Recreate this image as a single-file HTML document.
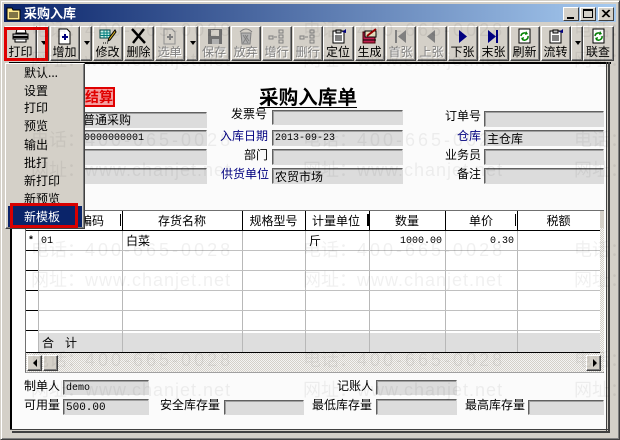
<!DOCTYPE html>
<html lang="zh"><head><meta charset="utf-8"><style>
html,body{margin:0;padding:0;width:620px;height:440px;overflow:hidden;background:#d4d0c8}
*{box-sizing:border-box}
body{font:12px "WenQuanYi Zen Hei","Noto Sans CJK SC",sans-serif;color:#000;position:relative}
div,span,svg{position:absolute}
.t{white-space:nowrap;line-height:14px}
.b{top:26px;height:35px;background:#d4d0c8;border:1px solid;border-color:#fff #404040 #404040 #fff;box-shadow:inset -1px -1px 0 #808080}
.b i{position:absolute;left:0;right:1px;top:18px;text-align:center;font-style:normal;font-size:12px;line-height:14px;white-space:nowrap}
.b.d i{color:#808080;text-shadow:1px 1px 0 #fff}
.b svg{left:50%;margin-left:-10px;top:1px;width:19px;height:17px}
.a{width:12px}
.a:after{content:"";position:absolute;left:3px;top:14px;border:3px solid transparent;border-top:4px solid #000;border-bottom:0}
.f{background:#dcdcdc;border:1px solid;border-color:#606060 #dcdcdc #dcdcdc #606060;box-shadow:inset 1px 1px 0 #a0a0a0;line-height:15px;padding-left:2px;white-space:nowrap;overflow:hidden}
.m{font-family:"Liberation Mono",monospace;font-size:10px}
.bl{color:#000080}
.w{color:rgba(0,0,0,.06);font:18px/26px "Liberation Sans","WenQuanYi Zen Hei",sans-serif;white-space:nowrap;pointer-events:none}
.w b{font-weight:normal;letter-spacing:3px}
.w u{text-decoration:none;letter-spacing:1px}
.v{background:#b8b8b8;width:1px;top:231px;height:121px}
.k{background:#000;width:1px;top:211px;height:20px}
.h{top:212px;height:17px;line-height:17px;text-align:center;white-space:nowrap}
.r{left:38px;width:562px;height:1px;background:#c0c0c0}
.d1{left:26px;width:12px;height:1px;background:#000}
.mi{left:24px;line-height:14px;white-space:nowrap}
</style></head><body>
<div style="left:0;top:0;width:620px;height:440px;border:1px solid;border-color:#d4d0c8 #404040 #404040 #d4d0c8;box-shadow:inset 1px 1px 0 #fff,inset -1px -1px 0 #808080"></div>

<div style="left:4px;top:4px;width:612px;height:18px;background:linear-gradient(90deg,#0a246a,#a6caf0)"></div>
<svg style="left:6px;top:6px" width="15" height="15"><path d="M1 2h5l1 2h7v10H1z" fill="#ffe98a" stroke="#000"/><path d="M3 7h9M3 9h9M3 11h9" stroke="#000"/></svg>
<div class="t" style="left:24px;top:6px;color:#fff;font-size:13px;font-weight:bold">采购入库</div>
<div style="left:563px;top:7px;width:16px;height:14px;background:#d4d0c8;border:1px solid;border-color:#fff #404040 #404040 #fff"><div style="left:3px;top:9px;width:7px;height:2px;background:#000"></div></div>
<div style="left:580px;top:7px;width:16px;height:14px;background:#d4d0c8;border:1px solid;border-color:#fff #404040 #404040 #fff"><div style="left:2px;top:1px;width:10px;height:9px;border:1px solid #000;border-top-width:2px"></div></div>
<div style="left:598px;top:7px;width:16px;height:14px;background:#d4d0c8;border:1px solid;border-color:#fff #404040 #404040 #fff"><svg style="left:2px;top:1px" width="10" height="10"><path d="M1 1l7 7M2 1l7 7M8 1L1 8M9 1L2 8" stroke="#000" stroke-width="1"/></svg></div>

<div class="b" style="left:5px;width:32px"><svg viewBox="0 0 19 17"><path d="M6 1h8l1 4H5z" fill="#fff" stroke="#000"/><path d="M2 6h15v5H2z" fill="#c0c0c0" stroke="#000"/><path d="M2 9h15" stroke="#000" stroke-width="2"/><path d="M4 11h11v3H4z" fill="#fff" stroke="#000"/></svg><i>打印</i></div>
<div class="b a" style="left:37px"></div>
<div class="b" style="left:50px;width:30px"><svg viewBox="0 0 19 17"><path d="M4 1h8l3 3v12H4z" fill="#fff" stroke="#000"/><path d="M7 9h6M10 6v6" stroke="#000080" stroke-width="2"/></svg><i>增加</i></div>
<div class="b a" style="left:80px"></div>
<div class="b" style="left:93px;width:30px"><svg viewBox="0 0 19 17"><path d="M2 2h10v8H2z" fill="#c8f0e8" stroke="#004040"/><path d="M2 5h10M2 7.500h10M6 2v8M9 2v8" stroke="#008080"/><path d="M17 2l1 2-6 8-2 1 1-3z" fill="#d8b020" stroke="#000"/><path d="M5 15h1M7 15h1M9 15h1" stroke="#000"/></svg><i>修改</i></div>
<div class="b" style="left:124px;width:30px"><svg viewBox="0 0 19 17"><path d="M3 1l13 14M15 1L4 15" stroke="#000" stroke-width="2.400"/></svg><i>删除</i></div>
<div class="b d" style="left:155px;width:30px"><svg viewBox="0 0 19 17"><path d="M4 1h8l3 3v12H4z" fill="#d4d0c8" stroke="#909090"/><path d="M7 9h6M10 6v6" stroke="#808080" stroke-width="2"/></svg><i>选单</i></div>
<div class="b a" style="left:186px"></div>
<div class="b d" style="left:199px;width:31px"><svg viewBox="0 0 19 17"><path d="M3 1h14v15H3z" fill="#707070"/><path d="M6 2h8v6H6z" fill="#d4d0c8"/><path d="M7 11h7v5H7z" fill="#b0b0b0"/></svg><i>保存</i></div>
<div class="b d" style="left:231px;width:30px"><svg viewBox="0 0 19 17"><path d="M5 5h10l-1 11H6z" fill="#b0b0b0" stroke="#808080"/><path d="M4 4q6-6 12 0" fill="#d4d0c8" stroke="#808080"/><path d="M7 7l5 8M12 7l-5 8M9 7l4 6" stroke="#808080"/></svg><i>放弃</i></div>
<div class="b d" style="left:262px;width:30px"><svg viewBox="0 0 19 17"><path d="M2 8h4v3H2zM7 9h3M12 2h4v3h-4zM12 7h4v3h-4zM12 12h4v3h-4z" fill="none" stroke="#808080"/></svg><i>增行</i></div>
<div class="b d" style="left:293px;width:30px"><svg viewBox="0 0 19 17"><path d="M2 8h4v3H2zM7 9h3M12 2h4v3h-4zM12 7h4v3h-4zM12 12h4v3h-4z" fill="none" stroke="#808080"/></svg><i>删行</i></div>
<div class="b" style="left:323px;width:31px"><svg viewBox="0 0 19 17"><path d="M4 3h11v12H4z" fill="#fff" stroke="#000"/><path d="M7 2h5v3H7z" fill="#c0c0c0" stroke="#000"/><path d="M6 8h7M6 10h7M6 12h7" stroke="#000"/><path d="M13 4l4-3v4z" fill="#000080"/></svg><i>定位</i></div>
<div class="b" style="left:355px;width:30px"><svg viewBox="0 0 19 17"><path d="M3 4h12v11H3z" fill="#c02050" stroke="#400"/><path d="M5 3h11v6H5z" fill="#e8e0c0" stroke="#000"/><path d="M7 8L16 1" stroke="#900" stroke-width="2"/><path d="M3 12h13" stroke="#000"/></svg><i>生成</i></div>
<div class="b d" style="left:386px;width:30px"><svg viewBox="0 0 19 17"><path d="M4 2h2v13H4zM15 2v13L7 8.500z" fill="#808080"/></svg><i>首张</i></div>
<div class="b d" style="left:417px;width:30px"><svg viewBox="0 0 19 17"><path d="M13 2v13L5 8.500z" fill="#808080"/></svg><i>上张</i></div>
<div class="b" style="left:448px;width:30px"><svg viewBox="0 0 19 17"><path d="M6 2v13l8-6.500z" fill="#000080"/></svg><i>下张</i></div>
<div class="b" style="left:479px;width:30px"><svg viewBox="0 0 19 17"><path d="M4 2v13l8-6.500zM12 2h2v13h-2z" fill="#000080"/></svg><i>末张</i></div>
<div class="b" style="left:510px;width:30px"><svg viewBox="0 0 19 17"><path d="M4 1h11v14H4z" fill="#fff" stroke="#000"/><path d="M6 8a3.500 3.500 0 0 1 6-2M13 8a3.500 3.500 0 0 1-6 3" fill="none" stroke="#008000" stroke-width="1.500"/><path d="M11 3l2 3-3 1zM8 13l-2-3 3-1z" fill="#008000"/></svg><i>刷新</i></div>
<div class="b" style="left:541px;width:30px"><svg viewBox="0 0 19 17"><path d="M4 3h11v12H4z" fill="#fff" stroke="#000"/><path d="M7 2h5v3H7z" fill="#c0c0c0" stroke="#000"/><path d="M6 8h7M6 10h7M6 12h7" stroke="#000"/><path d="M13 4l4-3v4z" fill="#000080"/></svg><i>流转</i></div>
<div class="b a" style="left:571px"></div>
<div class="b" style="left:583px;width:31px"><svg viewBox="0 0 19 17"><path d="M4 1h11v14H4z" fill="#fff" stroke="#000"/><path d="M6 8a3.500 3.500 0 0 1 6-2M13 8a3.500 3.500 0 0 1-6 3" fill="none" stroke="#008000" stroke-width="1.500"/><path d="M11 3l2 3-3 1zM8 13l-2-3 3-1z" fill="#008000"/></svg><i>联查</i></div>

<div style="left:9px;top:62px;width:602px;height:2px;background:#000"></div>
<div style="left:10px;top:64px;width:596px;height:365px;background:#fbfbfb;border-left:2px solid #000"></div>
<div style="left:606px;top:62px;width:1px;height:370px;background:#404040"></div>
<div style="left:608px;top:62px;width:2px;height:371px;background:#404040"></div>
<div style="left:10px;top:429px;width:598px;height:1px;background:#404040"></div>
<div style="left:12px;top:431px;width:598px;height:2px;background:#404040"></div>

<div style="left:83px;top:87px;width:32px;height:20px;background:#f4a0a0;border:2px solid #e00000;color:#e00000;font-weight:bold;font-size:14px;line-height:16px;white-space:nowrap;text-align:right">结算</div>
<div class="t" style="left:259px;top:86px;font-size:19.600px;line-height:20px;font-weight:bold;border-bottom:1px solid #000;padding-bottom:1px">采购入库单</div>

<div class="f" style="left:60px;top:112px;width:147px;height:16px;padding-left:22px;line-height:13px">普通采购</div>
<div class="f m" style="left:60px;top:130px;width:147px;height:16px;padding-left:23px">0000000001</div>
<div class="f" style="left:60px;top:149px;width:147px;height:16px"></div>
<div class="f" style="left:60px;top:168px;width:147px;height:16px"></div>

<div class="t" style="left:231px;top:107px">发票号</div>
<div class="t bl" style="left:220px;top:129px">入库日期</div>
<div class="t" style="left:244px;top:148px">部门</div>
<div class="t bl" style="left:221px;top:167px">供货单位</div>
<div class="f" style="left:272px;top:110px;width:131px;height:15px"></div>
<div class="f m" style="left:272px;top:130px;width:131px;height:16px;line-height:16px">2013-09-23</div>
<div class="f" style="left:272px;top:149px;width:131px;height:16px"></div>
<div class="f" style="left:272px;top:168px;width:131px;height:16px">农贸市场</div>

<div class="t" style="left:445px;top:109px">订单号</div>
<div class="t bl" style="left:457px;top:129px">仓库</div>
<div class="t" style="left:445px;top:148px">业务员</div>
<div class="t" style="left:457px;top:167px">备注</div>
<div class="f" style="left:484px;top:111px;width:120px;height:16px"></div>
<div class="f" style="left:484px;top:130px;width:120px;height:16px">主仓库</div>
<div class="f" style="left:484px;top:149px;width:120px;height:16px"></div>
<div class="f" style="left:484px;top:168px;width:120px;height:16px"></div>

<div style="left:25px;top:210px;width:579px;height:163px;background:#fff;border:1px solid #707070;border-bottom-color:#a0a0a0;overflow:hidden"></div>
<div style="left:38px;top:333px;width:562px;height:19px;background:#dedede"></div>
<div style="left:26px;top:230px;width:574px;height:1px;background:#000"></div>
<div style="left:26px;top:352px;width:574px;height:1px;background:#000"></div>
<div style="left:38px;top:231px;width:1px;height:121px;background:#b8b8b8"></div>
<div class="v" style="left:122px"></div><div class="v" style="left:242px"></div><div class="v" style="left:305px"></div><div class="v" style="left:369px"></div><div class="v" style="left:445px"></div><div class="v" style="left:517px"></div>
<div class="k" style="left:122px"></div><div class="k" style="left:242px"></div><div class="k" style="left:305px"></div><div class="k" style="left:369px"></div><div class="k" style="left:445px"></div><div class="k" style="left:517px"></div>
<div style="left:367px;top:214px;width:2px;height:12px;background:#000"></div>
<div style="left:120px;top:214px;width:1px;height:12px;background:#000"></div>
<div style="left:515px;top:214px;width:1px;height:12px;background:#000"></div>
<div class="r" style="top:250px"></div><div class="r" style="top:270px"></div><div class="r" style="top:290px"></div><div class="r" style="top:310px"></div><div class="r" style="top:330px"></div>
<div class="d1" style="top:250px"></div><div class="d1" style="top:270px"></div><div class="d1" style="top:290px"></div><div class="d1" style="top:310px"></div><div class="d1" style="top:330px"></div>

<div class="h" style="left:80px;width:24px">编码</div>
<div class="h" style="left:122px;width:120px">存货名称</div>
<div class="h" style="left:242px;width:63px">规格型号</div>
<div class="h" style="left:305px;width:62px">计量单位</div>
<div class="h" style="left:369px;width:76px">数量</div>
<div class="h" style="left:445px;width:72px">单价</div>
<div class="h" style="left:517px;width:83px">税额</div>

<div class="t m" style="left:28px;top:235px;font-weight:bold">*</div>
<div class="t m" style="left:41px;top:235px">01</div>
<div class="t" style="left:126px;top:234px">白菜</div>
<div class="t" style="left:309px;top:234px">斤</div>
<div class="t m" style="left:400px;top:235px">1000.00</div>
<div class="t m" style="left:490px;top:235px">0.30</div>
<div class="t" style="left:42px;top:336px">合</div>
<div class="t" style="left:65px;top:336px">计</div>

<div style="left:600px;top:211px;width:4px;height:161px;background:#d4d0c8"></div>
<div style="left:26px;top:353px;width:578px;height:19px;background:repeating-conic-gradient(#d4d0c8 0 25%,#f4f4f4 0 50%) 0 0/2px 2px"></div>
<div style="left:600px;top:228px;width:4px;height:124px;background:repeating-conic-gradient(#d4d0c8 0 25%,#f4f4f4 0 50%) 0 0/2px 2px"></div>
<div class="b" style="left:27px;top:355px;width:15px;height:16px"><svg style="left:4px;top:3px;margin:0;width:6px;height:8px"><path d="M5 0v8L1 4z"/></svg></div>
<div class="b" style="left:43px;top:355px;width:15px;height:16px"></div>
<div class="b" style="left:586px;top:355px;width:15px;height:16px"><svg style="left:5px;top:3px;margin:0;width:6px;height:8px"><path d="M1 0v8l4-4z"/></svg></div>

<div class="t" style="left:24px;top:379px">制单人</div>
<div class="f m" style="left:63px;top:380px;width:86px;height:15px;line-height:16px">demo</div>
<div class="t" style="left:24px;top:398px">可用量</div>
<div class="f m" style="left:63px;top:399px;width:86px;height:16px;line-height:17px;font-size:11px">500.00</div>
<div class="t" style="left:160px;top:398px">安全库存量</div>
<div class="f" style="left:224px;top:400px;width:80px;height:15px"></div>
<div class="t" style="left:337px;top:379px">记账人</div>
<div class="f" style="left:376px;top:380px;width:81px;height:15px"></div>
<div class="t" style="left:312px;top:398px">最低库存量</div>
<div class="f" style="left:376px;top:399px;width:81px;height:16px"></div>
<div class="t" style="left:465px;top:398px">最高库存量</div>
<div class="f" style="left:528px;top:400px;width:76px;height:15px"></div>

<div style="left:5px;top:63px;width:80px;height:166px;background:#d4d0c8;border:1px solid;border-color:#fff #404040 #404040 #fff;box-shadow:inset -1px -1px 0 #808080"></div>
<div class="mi" style="top:66px">默认...</div>
<div class="mi" style="top:84px">设置</div>
<div class="mi" style="top:101px">打印</div>
<div class="mi" style="top:119px">预览</div>
<div class="mi" style="top:138px">输出</div>
<div class="mi" style="top:156px">批打</div>
<div class="mi" style="top:174px">新打印</div>
<div class="mi" style="top:192px">新预览</div>
<div style="left:8px;top:206px;width:74px;height:21px;background:#0a246a"></div>
<div class="mi" style="top:210px;color:#fff">新模板</div>

<div style="left:4px;top:27px;width:44px;height:34px;border:3px solid #e00000"></div>
<div style="left:10px;top:203px;width:68px;height:25px;border:3px solid #d80000"></div>

<div class="w" style="left:31px;top:17px">电话：<b>400-665-0028</b></div><div class="w" style="left:303px;top:17px">电话：<b>400-665-0028</b></div><div class="w" style="left:574px;top:17px">电话：</div>
<div class="w" style="left:31px;top:47px">网址：<u>www.chanjet.net</u></div><div class="w" style="left:303px;top:47px">网址：<u>www.chanjet.net</u></div><div class="w" style="left:574px;top:47px">网址：</div>
<div class="w" style="left:31px;top:127px">电话：<b>400-665-0028</b></div><div class="w" style="left:303px;top:127px">电话：<b>400-665-0028</b></div><div class="w" style="left:574px;top:127px">电话：</div>
<div class="w" style="left:31px;top:157px">网址：<u>www.chanjet.net</u></div><div class="w" style="left:303px;top:157px">网址：<u>www.chanjet.net</u></div><div class="w" style="left:574px;top:157px">网址：</div>
<div class="w" style="left:31px;top:237px">电话：<b>400-665-0028</b></div><div class="w" style="left:303px;top:237px">电话：<b>400-665-0028</b></div><div class="w" style="left:574px;top:237px">电话：</div>
<div class="w" style="left:31px;top:267px">网址：<u>www.chanjet.net</u></div><div class="w" style="left:303px;top:267px">网址：<u>www.chanjet.net</u></div><div class="w" style="left:574px;top:267px">网址：</div>
<div class="w" style="left:31px;top:347px">电话：<b>400-665-0028</b></div><div class="w" style="left:303px;top:347px">电话：<b>400-665-0028</b></div><div class="w" style="left:574px;top:347px">电话：</div>
<div class="w" style="left:31px;top:377px">网址：<u>www.chanjet.net</u></div><div class="w" style="left:303px;top:377px">网址：<u>www.chanjet.net</u></div><div class="w" style="left:574px;top:377px">网址：</div>
</body></html>
